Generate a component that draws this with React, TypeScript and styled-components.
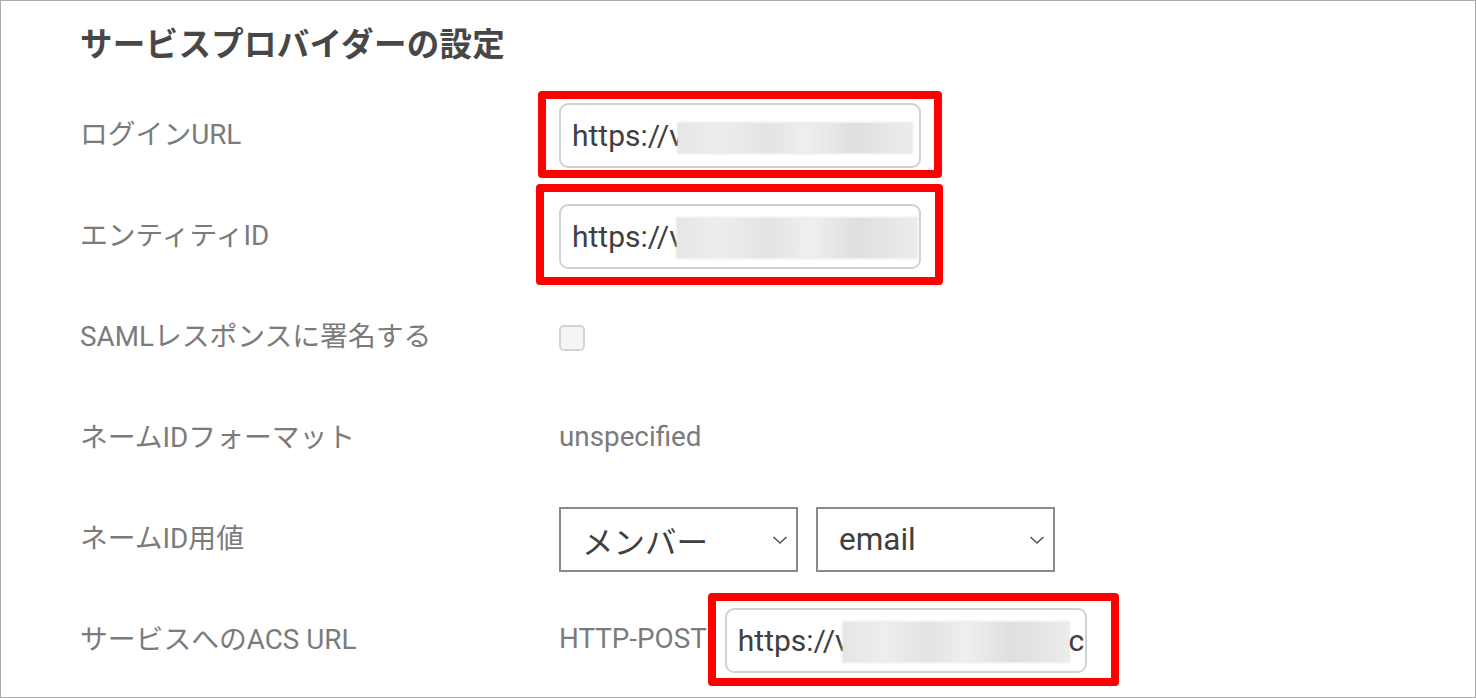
import React from "react";
import styled, { createGlobalStyle } from "styled-components";

const Global = createGlobalStyle`
  html, body { margin: 0; padding: 0; background: #fff; }
  body { font-family: Roboto, "Noto Sans CJK JP", sans-serif; }
`;

const Frame = styled.div`
  width: 1476px;
  height: 698px;
  box-sizing: border-box;
  border: 1px solid #ababab;
  background: #fff;
  padding-left: 79px;
  overflow: hidden;
  font-family: Roboto, "Noto Sans CJK JP", sans-serif;
`;

const Heading = styled.h2`
  margin: 0;
  height: 84px;
  box-sizing: border-box;
  padding-bottom: 4px;
  display: flex;
  align-items: center;
  font-size: 32.5px;
  font-weight: 700;
  color: #474747;
  letter-spacing: 0.3px;
`;

const Grid = styled.div`
  display: grid;
  grid-template-columns: 479px 1fr;
  grid-auto-rows: 101px;
  align-items: center;
`;

const Label = styled.div`
  font-size: 27.8px;
  color: #7b7b7b;
  white-space: nowrap;
  padding-bottom: 7px;
`;

const Value = styled.div`
  display: flex;
  align-items: center;
  gap: 18px;
`;

const Plain = styled.span`
  font-size: 27.8px;
  color: #7b7b7b;
  padding-bottom: 4px;
`;

const Annotated = styled.div<{ $t: number; $r: number; $b: number; $l: number }>`
  position: relative;
  &::after {
    content: "";
    position: absolute;
    top: ${(p) => -p.$t}px;
    right: ${(p) => -p.$r}px;
    bottom: ${(p) => -p.$b}px;
    left: ${(p) => -p.$l}px;
    border: 8px solid #ff0000;
    border-radius: 4px;
    pointer-events: none;
  }
`;

const InputBox = styled.div`
  width: 362px;
  height: 65px;
  box-sizing: border-box;
  border: 2px solid #d2d2d2;
  border-radius: 9px;
  background: #fff;
  display: flex;
  align-items: center;
  padding-left: 11px;
  overflow: hidden;
  font-size: 30px;
  color: #404040;
  white-space: nowrap;
`;

const Blur = styled.span<{ $w: number; $h: number; $dy: number; $ml: number }>`
  flex: none;
  display: block;
  width: ${(p) => p.$w}px;
  height: ${(p) => p.$h}px;
  margin-left: ${(p) => p.$ml}px;
  margin-top: ${(p) => p.$dy}px;
  background: linear-gradient(
    90deg,
    #e6e6e6 0%,
    #eeeeee 18%,
    #e3e3e3 38%,
    #efefef 55%,
    #dfdfdf 75%,
    #ececec 100%
  );
  box-shadow: 0 0 2px 1px rgba(225, 225, 225, 0.7);
`;

const Checkbox = styled.div`
  width: 26px;
  height: 26px;
  box-sizing: border-box;
  border: 2px solid #d4d4d4;
  border-radius: 5px;
  background: #f5f5f5;
`;

const SelectBox = styled.div`
  width: 239px;
  height: 65px;
  box-sizing: border-box;
  border: 2px solid #8a8a8a;
  display: flex;
  align-items: center;
  justify-content: space-between;
  padding: 0 8px 0 21px;
  font-size: 31.5px;
  color: #404040;
  background: #fff;
`;

const Chevron = () => (
  <svg width="16" height="10" viewBox="0 0 16 10">
    <path d="M1.5 2 L8 8 L14.5 2" fill="none" stroke="#555" strokeWidth="1.6" />
  </svg>
);

type UrlProps = {
  t: number; r: number; b: number; l: number;
  bw: number; bh: number; dy: number; ml: number;
  tail?: string;
};

const UrlField = ({ t, r, b, l, bw, bh, dy, ml, tail }: UrlProps) => (
  <Annotated $t={t} $r={r} $b={b} $l={l}>
    <InputBox>
      <span>https://v</span>
      <Blur $w={bw} $h={bh} $dy={dy} $ml={ml} />
      {tail ? <span>{tail}</span> : null}
    </InputBox>
  </Annotated>
);

export default function App() {
  return (
    <>
      <Global />
      <Frame>
        <Heading>サービスプロバイダーの設定</Heading>
        <Grid>
          <Label>ログインURL</Label>
          <Value>
            <UrlField t={12} r={21} b={10} l={21} bw={234} bh={30} dy={4} ml={-6} />
          </Value>

          <Label>エンティティID</Label>
          <Value>
            <UrlField t={20} r={22} b={16} l={23} bw={240} bh={40} dy={3} ml={-7} />
          </Value>

          <Label>SAMLレスポンスに署名する</Label>
          <Value>
            <Checkbox />
          </Value>

          <Label>ネームIDフォーマット</Label>
          <Value>
            <Plain>unspecified</Plain>
          </Value>

          <Label>ネームID用値</Label>
          <Value>
            <SelectBox>
              <span>メンバー</span>
              <Chevron />
            </SelectBox>
            <SelectBox>
              <span>email</span>
              <Chevron />
            </SelectBox>
          </Value>

          <Label>サービスへのACS URL</Label>
          <Value>
            <Plain>HTTP-POST</Plain>
            <UrlField t={15} r={32} b={13} l={17} bw={226} bh={40} dy={3} ml={-7} tail="c" />
          </Value>
        </Grid>
      </Frame>
    </>
  );
}
